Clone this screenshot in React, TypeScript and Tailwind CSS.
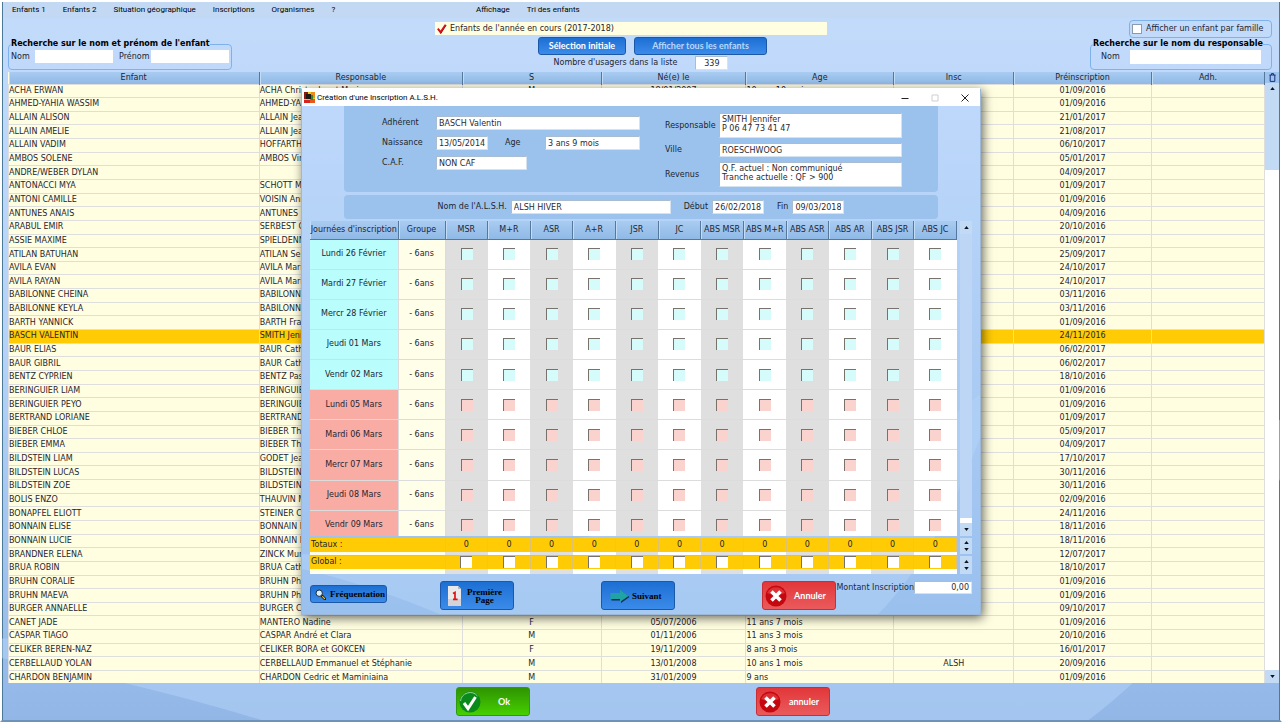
import React from 'react';

const SANS = "font-['DejaVu_Sans',sans-serif]";

const MENU_LEFT = [
    'Enfants 1',
    'Enfants 2',
    'Situation géographique',
    'Inscriptions',
    'Organismes',
    '?',
];

interface Child {
    name: string;
    parent: string;
    date: string;
    sex?: string;
    born?: string;
    age?: string;
    insc?: string;
}

const CHILDREN: Child[] = [
    { name: 'ACHA ERWAN', parent: 'ACHA Christophe et Marie', date: '01/09/2016', sex: 'M', born: '18/01/2007', age: '10 ans 10 mois' },
    { name: 'AHMED-YAHIA WASSIM', parent: 'AHMED-YAHIA', date: '01/09/2016' },
    { name: 'ALLAIN ALISON', parent: 'ALLAIN Jean', date: '21/01/2017' },
    { name: 'ALLAIN AMELIE', parent: 'ALLAIN Jean', date: '21/08/2017' },
    { name: 'ALLAIN VADIM', parent: 'HOFFARTH', date: '06/10/2017' },
    { name: 'AMBOS SOLENE', parent: 'AMBOS Vince', date: '05/01/2017' },
    { name: 'ANDRE/WEBER DYLAN', parent: '', date: '04/09/2017' },
    { name: 'ANTONACCI MYA', parent: 'SCHOTT Ma', date: '01/09/2017' },
    { name: 'ANTONI CAMILLE', parent: 'VOISIN Anne', date: '01/09/2016' },
    { name: 'ANTUNES ANAIS', parent: 'ANTUNES Ma', date: '04/09/2016' },
    { name: 'ARABUL EMIR', parent: 'SERBEST C', date: '20/10/2016' },
    { name: 'ASSIE MAXIME', parent: 'SPIELDENN', date: '01/09/2017' },
    { name: 'ATILAN BATUHAN', parent: 'ATILAN Selim', date: '25/09/2017' },
    { name: 'AVILA EVAN', parent: 'AVILA Marie', date: '24/10/2017' },
    { name: 'AVILA RAYAN', parent: 'AVILA Marie', date: '24/10/2017' },
    { name: 'BABILONNE CHEINA', parent: 'BABILONNE', date: '03/11/2016' },
    { name: 'BABILONNE KEYLA', parent: 'BABILONNE', date: '03/11/2016' },
    { name: 'BARTH YANNICK', parent: 'BARTH Fran', date: '01/09/2016' },
    { name: 'BASCH VALENTIN', parent: 'SMITH Jenn', date: '24/11/2016' },
    { name: 'BAUR ELIAS', parent: 'BAUR Cathe', date: '06/02/2017' },
    { name: 'BAUR GIBRIL', parent: 'BAUR Cathe', date: '06/02/2017' },
    { name: 'BENTZ CYPRIEN', parent: 'BENTZ Pasc', date: '18/10/2016' },
    { name: 'BERINGUIER LIAM', parent: 'BERINGUIER', date: '01/09/2016' },
    { name: 'BERINGUIER PEYO', parent: 'BERINGUIER', date: '01/09/2016' },
    { name: 'BERTRAND LORIANE', parent: 'BERTRAND', date: '01/09/2017' },
    { name: 'BIEBER CHLOE', parent: 'BIEBER Tho', date: '05/09/2017' },
    { name: 'BIEBER EMMA', parent: 'BIEBER Tho', date: '04/09/2017' },
    { name: 'BILDSTEIN LIAM', parent: 'GODET Jean', date: '17/10/2017' },
    { name: 'BILDSTEIN LUCAS', parent: 'BILDSTEIN', date: '30/11/2016' },
    { name: 'BILDSTEIN ZOE', parent: 'BILDSTEIN', date: '30/11/2016' },
    { name: 'BOLIS ENZO', parent: 'THAUVIN Ma', date: '02/09/2016' },
    { name: 'BONAPFEL ELIOTT', parent: 'STEINER Cl', date: '24/11/2016' },
    { name: 'BONNAIN ELISE', parent: 'BONNAIN Ni', date: '18/11/2016' },
    { name: 'BONNAIN LUCIE', parent: 'BONNAIN Ni', date: '18/11/2016' },
    { name: 'BRANDNER ELENA', parent: 'ZINCK Muri', date: '12/07/2017' },
    { name: 'BRUA ROBIN', parent: 'BRUA Cath', date: '18/10/2017' },
    { name: 'BRUHN CORALIE', parent: 'BRUHN Phil', date: '01/09/2016' },
    { name: 'BRUHN MAEVA', parent: 'BRUHN Phil', date: '01/09/2016' },
    { name: 'BURGER ANNAELLE', parent: 'BURGER Cé', date: '09/10/2017' },
    { name: 'CANET JADE', parent: 'MANTERO Nadine', date: '01/09/2016', sex: 'F', born: '05/07/2006', age: '11 ans 7 mois' },
    { name: 'CASPAR TIAGO', parent: 'CASPAR André et Clara', date: '20/10/2016', sex: 'M', born: '01/11/2006', age: '11 ans 3 mois' },
    { name: 'CELIKER BEREN-NAZ', parent: 'CELIKER BORA et GOKCEN', date: '16/01/2017', sex: 'F', born: '19/11/2009', age: '8 ans 3 mois' },
    { name: 'CERBELLAUD YOLAN', parent: 'CERBELLAUD Emmanuel et Stéphanie', date: '20/09/2016', sex: 'M', born: '13/01/2008', age: '10 ans 1 mois', insc: 'ALSH' },
    { name: 'CHARDON BENJAMIN', parent: 'CHARDON Cedric et Maminiaina', date: '01/09/2016', sex: 'M', born: '31/01/2009', age: '9 ans' },
];

const SELECTED = 'BASCH VALENTIN';

const DAYS = [
    'Lundi 26 Février',
    'Mardi 27 Février',
    'Mercr 28 Février',
    'Jeudi 01 Mars',
    'Vendr 02 Mars',
    'Lundi 05 Mars',
    'Mardi 06 Mars',
    'Mercr 07 Mars',
    'Jeudi 08 Mars',
    'Vendr 09 Mars',
];

const SLOTS = ['MSR', 'M+R', 'ASR', 'A+R', 'JSR', 'JC', 'ABS MSR', 'ABS M+R', 'ABS ASR', 'ABS AR', 'ABS JSR', 'ABS JC'];

// --- Icons ---

const Arrow = ({ up = false }: { up?: boolean }) => (
    <svg className="h-[3px] w-[5px]" viewBox="0 0 6 4">
        <path d={up ? 'M0 4L3 0L6 4Z' : 'M0 0L3 4L6 0Z'} fill="#0b1420" />
    </svg>
);

const CrossIcon = () => (
    <svg className="size-[22px] shrink-0" viewBox="0 0 22 22">
        <circle cx="11" cy="11" r="10.5" fill="#c5080f" />
        <path d="M2 8a10 10 0 0 1 18 0Q11 12 2 8Z" fill="#dc3034" />
        <path d="M6.5 6.5l9 9M15.5 6.5l-9 9" stroke="#fff" strokeWidth="3.6" />
    </svg>
);

const OkIcon = () => (
    <svg className="size-[22px] shrink-0" viewBox="0 0 22 22">
        <circle cx="11" cy="11" r="10.5" fill="#0b8a1c" />
        <path d="M1.500 10a9.700 9.700 0 0 1 17 -5" fill="none" stroke="#8fd694" strokeWidth="1" />
        <path d="M5 12l4 5.5L16.5 6" fill="none" stroke="#fff" strokeWidth="3" />
    </svg>
);

const RedCheckIcon = () => (
    <svg className="size-[10px]" viewBox="0 0 10 10">
        <path d="M1.2 5.2L3.8 9L9 1" fill="none" stroke="#400" strokeWidth="1.2" />
        <path d="M0.8 4.6L3.6 8L8.6 0.8" fill="none" stroke="#d8101c" strokeWidth="1.9" />
    </svg>
);

const MagnifierIcon = () => (
    <svg className="size-[11px] shrink-0" viewBox="0 0 11 11">
        <path d="M6 6l4 4" stroke="#1a1a1a" strokeWidth="2.6" strokeLinecap="round" />
        <path d="M7.6 7.6l2 2" stroke="#e8c040" strokeWidth="1.2" strokeLinecap="round" />
        <circle cx="4.2" cy="4.2" r="3.2" fill="#d8f0fb" stroke="#1a2a3a" strokeWidth="1" />
    </svg>
);

const FirstPageIcon = () => (
    <svg className="h-5 w-[13px] shrink-0" viewBox="0 0 13 20">
        <path d="M0 0h10l3 3v17H0Z" fill="#e9e9ec" />
        <path d="M10 0v3h3Z" fill="#b5b8c0" />
        <path d="M0 13h13v7H0Z" fill="#d3d3d8" />
        <path d="M5 7.4l2-1v7M5 13.4h4.600" fill="none" stroke="#e01414" strokeWidth="1.7" />
    </svg>
);

const NextIcon = () => (
    <svg className="h-[14px] w-[20px] shrink-0" viewBox="0 0 20 14">
        <path d="M1.500 5H11V1.500L19.500 8L11 14V11.500H1.500Z" fill="#0c2f57" />
        <path d="M0.500 4H10V0.500L18.500 7L10 13V10H0.500Z" fill="#1fa3a4" />
    </svg>
);

const TrashIcon = () => (
    <svg className="h-[9px] w-[7px]" viewBox="0 0 7 9">
        <path d="M0.500 2h6M2.500 2V0.600h2V2M1.200 2v6.400h4.600V2" fill="none" stroke="#1b2f7a" strokeWidth="1" />
    </svg>
);

const AppIcon = () => (
    <svg className="size-[11px]" viewBox="0 0 11 11">
        <path d="M0 0h11v11H0Z" fill="#f0c419" />
        <path d="M0 0h4v7H0Z" fill="#8c1a12" />
        <path d="M7 0h4v6H7Z" fill="#f08a1c" />
        <path d="M0 8h6v3H0Z" fill="#d8241c" />
        <path d="M6 7h5v4H6Z" fill="#e8581c" />
        <path d="M2 2h5v5H2Z" fill="#1c1a14" />
        <path d="M7 3h2v5H7Z" fill="#2f8a2c" />
    </svg>
);

// --- Shared pieces ---

const FIELD = 'bg-white border border-[#a9bdd2] border-b-[#d5e3f1] border-r-[#d5e3f1] text-[#2a2a33] px-[2px] outline-none';

const HEAD = 'bg-linear-to-b from-[#a9cbf1] to-[#8fb9e6] font-normal border-r border-[#56789c] shadow-[inset_1px_0_0_#c3dcf7]';

const BLUE_BUTTON = 'rounded-[3px] border border-[#1b58a8] bg-linear-to-b from-[#1c6fd3] to-[#3b8bea]';

const RED_BUTTON = 'flex h-[29px] w-[74px] items-center rounded-[3px] border border-[#c92e33] bg-linear-to-b from-[#e2363a] to-[#ea5a5c] px-[2px] text-white';

const Swoosh = () => (
    <svg className="pointer-events-none absolute inset-0 size-full" viewBox="0 0 1282 722" preserveAspectRatio="none">
        <path d="M0 660Q120 680 260 722H1090Q1200 640 1282 480V420Q900 640 0 640Z" fill="#b4d4f7" opacity="0.5" />
    </svg>
);

interface FieldProps {
    id: string;
    label: string;
    value: string;
    labelClass: string;
    inputClass: string;
}

const Field: React.FC<FieldProps> = ({ id, label, value, labelClass, inputClass }) => (
    <div className="flex items-center">
        <label htmlFor={id} className={labelClass}>{label}</label>
        <input id={id} defaultValue={value} className={`h-[14px] ${FIELD} ${inputClass}`} />
    </div>
);

const AreaField: React.FC<FieldProps> = ({ id, label, value, labelClass, inputClass }) => (
    <div className="flex items-center">
        <label htmlFor={id} className={labelClass}>{label}</label>
        <textarea id={id} rows={2} defaultValue={value} className={`block h-[25px] resize-none overflow-hidden pt-px leading-[9px] ${FIELD} ${inputClass}`} />
    </div>
);

const SlotCols = () => (
    <colgroup>
        <col className="w-[88px]" />
        <col className="w-[47px]" />
        {SLOTS.map((s) => <col key={s} />)}
    </colgroup>
);

const CHECKBOX = 'block mx-auto size-3 appearance-none border-t border-l border-[#77736c]';

// --- Registration dialog ---

const RegistrationDialog = () => (
    <section
        aria-label="Création d'une Inscription A.L.S.H."
        className="absolute inset-x-0 top-[86px] mx-auto w-[680px] overflow-hidden border border-[#9db7d6] border-t-white bg-linear-to-b from-[#bfd9fb] to-[#9ac0ee] shadow-[2px_3px_10px_rgba(0,0,0,0.6)]"
    >
        <Swoosh />
        <header className="relative flex h-[17px] items-center bg-white pl-[2px] pr-[11px]">
            <AppIcon />
            <h2 className="ml-[2px] flex-1 font-['Roboto',sans-serif] text-[8px] text-black">Création d'une Inscription A.L.S.H.</h2>
            <div className="flex items-center gap-[22px]">
                <button type="button" aria-label="Réduire">
                    <svg className="size-[8px]" viewBox="0 0 8 8"><path d="M0.500 4.500h7" stroke="#222" /></svg>
                </button>
                <button type="button" aria-label="Agrandir" disabled>
                    <svg className="size-[8px]" viewBox="0 0 8 8"><path d="M1 1h6v6H1Z" fill="none" stroke="#cfcfcf" /></svg>
                </button>
                <button type="button" aria-label="Fermer">
                    <svg className="size-[8px]" viewBox="0 0 8 8"><path d="M0.500 0.500l7 7M7.500 0.500l-7 7" stroke="#222" /></svg>
                </button>
            </div>
        </header>

        <div className="relative px-2 pb-1">
            {/* Child details */}
            <div className="mx-[34px] flex h-[86px] justify-between rounded-b-[4px] bg-[#9ac2ec] pl-[38px] pr-9 pt-[7px]">
                <div className="flex flex-col gap-[6px] pt-[3px]">
                    <Field id="adherent" label="Adhérent" value="BASCH Valentin" labelClass="w-[54px]" inputClass="w-[204px]" />
                    <div className="flex">
                        <Field id="naissance" label="Naissance" value="13/05/2014" labelClass="w-[54px]" inputClass="w-[52px] text-right" />
                        <Field id="age" label="Age" value="3 ans 9 mois" labelClass="ml-[17px] w-[40px]" inputClass="w-[95px]" />
                    </div>
                    <Field id="caf" label="C.A.F." value="NON CAF" labelClass="w-[54px]" inputClass="w-[91px]" />
                </div>
                <div className="flex flex-col gap-[5px]">
                    <AreaField id="responsable" label="Responsable" value={'SMITH Jennifer\nP 06 47 73 41 47'} labelClass="w-[54px]" inputClass="w-[183px]" />
                    <Field id="ville" label="Ville" value="ROESCHWOOG" labelClass="w-[54px]" inputClass="w-[183px]" />
                    <AreaField id="revenus" label="Revenus" value={'Q.F. actuel : Non communiqué\nTranche actuelle : QF > 900'} labelClass="w-[54px]" inputClass="w-[183px]" />
                </div>
            </div>

            <div className="mx-[34px] mt-[3px] flex h-6 items-center justify-center gap-[13px] rounded-[4px] bg-[#9ac2ec]">
                <Field id="alsh" label="Nom de l'A.L.S.H." value="ALSH HIVER" labelClass="mr-1" inputClass="w-[160px]" />
                <Field id="debut" label="Début" value="26/02/2018" labelClass="mr-1" inputClass="w-[52px] text-center" />
                <Field id="fin" label="Fin" value="09/03/2018" labelClass="mr-1" inputClass="w-[52px] text-center" />
            </div>

            {/* Attendance grid */}
            <div className="mt-[2px] flex h-[315px] gap-[3px]">
                <div className="flex-1 overflow-hidden bg-white">
                    <table className="h-[320px] w-full table-fixed border-collapse text-center">
                        <SlotCols />
                        <thead>
                            <tr className="h-[18px]">
                                <th className={`${HEAD} border-b whitespace-nowrap`}>Journées d'inscription</th>
                                <th className={`${HEAD} border-b`}>Groupe</th>
                                {SLOTS.map((s) => <th key={s} className={`${HEAD} border-b whitespace-nowrap`}>{s}</th>)}
                            </tr>
                        </thead>
                        <tbody>
                            {DAYS.map((day, i) => (
                                <tr key={day}>
                                    <td className={`border border-[#dcdcdc] border-l-0 ${i < 5 ? 'bg-[#b9fdfd]' : 'bg-[#f9aca3]'}`}>{day}</td>
                                    <td className="border border-[#dcdcdc] bg-[#fffee8]">- 6ans</td>
                                    {SLOTS.map((s) => (
                                        <td key={s} className="border-y border-[#dcdcdc] odd:bg-[#dfdfdf]">
                                            <input type="checkbox" aria-label={`${day} ${s}`} className={`${CHECKBOX} ${i < 5 ? 'bg-[#d6fbfb]' : 'bg-[#fad3cf]'}`} />
                                        </td>
                                    ))}
                                </tr>
                            ))}
                        </tbody>
                    </table>
                </div>
                <div className="flex w-3 flex-col bg-white">
                    <div className="flex h-[13px] items-center justify-center bg-[#c3daf5]"><Arrow up /></div>
                    <div className="flex-1 bg-[#bdd6f5]" />
                    <div className="mt-[5px] flex h-[13px] items-center justify-center bg-[#c3daf5]"><Arrow /></div>
                </div>
            </div>

            {/* Totals and global selection */}
            <div className="mt-[2px] flex gap-[3px]">
                <table className="flex-1 table-fixed border-collapse text-center">
                    <SlotCols />
                    <tbody>
                        <tr className="h-[14px] bg-[#ffcb05]">
                            <th colSpan={2} scope="row" className="border-r border-[#dfc271] pl-px text-left font-normal">Totaux :</th>
                            {SLOTS.map((s) => <td key={s} className="border-r border-[#dfc271]">0</td>)}
                        </tr>
                        <tr className="h-[3px]">
                            <td colSpan={2} className="border-b border-[#9fc3ee] bg-[#fffee8]" />
                            {SLOTS.map((s) => <td key={s} className="border-b border-[#9fc3ee] bg-white even:bg-[#dfdfdf]" />)}
                        </tr>
                        <tr className="h-[14px] bg-[#ffcb05]">
                            <th colSpan={2} scope="row" className="border-r border-[#dfc271] pl-px text-left font-normal">Global :</th>
                            {SLOTS.map((s) => (
                                <td key={s} className="border-r border-[#dfc271]">
                                    <input type="checkbox" aria-label={`Global ${s}`} className={`${CHECKBOX} bg-white`} />
                                </td>
                            ))}
                        </tr>
                        <tr className="h-[5px]">
                            <td colSpan={2} className="bg-[#fffee8]" />
                            {SLOTS.map((s) => <td key={s} className="bg-white even:bg-[#dfdfdf]" />)}
                        </tr>
                    </tbody>
                </table>
                <div className="flex w-3 flex-col gap-[2px]">
                    <div className="flex h-4 flex-col items-center justify-evenly bg-[#c3daf5]"><Arrow up /><Arrow /></div>
                    <div className="flex flex-1 flex-col items-center justify-evenly bg-[#c3daf5]"><Arrow up /><Arrow /></div>
                </div>
            </div>

            {/* Actions */}
            <div className="mt-[7px] flex items-start font-['Liberation_Serif',serif] text-[9px] font-bold leading-[8px] text-black">
                <button type="button" className={`mt-1 flex h-[18px] w-[77px] items-center gap-1 px-1 ${BLUE_BUTTON}`}>
                    <MagnifierIcon />
                    Fréquentation
                </button>
                <button type="button" className={`ml-[53px] flex h-[29px] w-[74px] items-center gap-[2px] px-[7px] ${BLUE_BUTTON}`}>
                    <FirstPageIcon />
                    Première Page
                </button>
                <button type="button" className={`ml-[87px] flex h-[29px] w-[74px] items-center gap-[2px] px-[8px] ${BLUE_BUTTON}`}>
                    <NextIcon />
                    Suivant
                </button>
                <button type="button" className={`ml-[87px] font-['Lato',sans-serif] ${RED_BUTTON}`}>
                    <CrossIcon />
                    <span className="flex-1 text-center">Annuler</span>
                </button>
                <div className={`ml-auto flex items-center text-[8px] font-normal text-[#1b2a3c] ${SANS}`}>
                    <label htmlFor="montant" className="whitespace-nowrap">Montant Inscription</label>
                    <input id="montant" defaultValue="0,00" className={`h-[13px] w-[58px] text-right ${FIELD}`} />
                </div>
            </div>
        </div>
    </section>
);

// --- Main window ---

const App = () => (
    <div className={`relative flex min-h-screen flex-col border-2 border-white border-b-[#6d93bb] bg-linear-to-b from-[#c3dbfb] via-[#b4d2f7] to-[#92b7e7] text-[8px] leading-[10px] text-[#1f2530] shadow-[inset_1px_0_0_#4b7a99,inset_-1px_0_0_#4b7a99] ${SANS}`}>
        <Swoosh />
        <nav className="relative mx-px flex h-4 items-center bg-[#c3d9f3] pl-[9px] font-['Roboto',sans-serif] text-[8px] text-black">
            <div className="flex w-[464px] gap-[17px]">
                {MENU_LEFT.map((item) => <a key={item} href="#">{item}</a>)}
            </div>
            <a href="#" className="mr-[17px]">Affichage</a>
            <a href="#">Tri des enfants</a>
        </nav>

        <div className="relative flex h-[54px] justify-between pl-[6px] pr-2">
            <fieldset className="mt-[21px] h-[31px] w-[222px] rounded-[4px] border border-[#7fb2ea] px-[2px]">
                <legend className="text-[8px] font-bold leading-[10px] text-black">Recherche sur le nom et prénom de l'enfant</legend>
                <div className="mt-px flex items-center">
                    <label htmlFor="nom" className="w-6">Nom</label>
                    <input id="nom" className="h-[13px] w-[78px] bg-white" />
                    <label htmlFor="prenom" className="ml-[6px] mr-[2px]">Prénom</label>
                    <input id="prenom" className="h-[13px] w-[78px] bg-white" />
                </div>
            </fieldset>

            <div className="absolute inset-x-0 mx-auto mt-1 flex w-[412px] flex-col items-center">
                <div className="flex h-[13px] w-[392px] items-center gap-[3px] self-start bg-[#fffee1] pl-[2px]">
                    <RedCheckIcon />
                    Enfants de l'année en cours (2017-2018)
                </div>
                <div className="mt-[2px] flex gap-2 self-end pr-20 font-['Lato',sans-serif] text-[9px] font-bold">
                    <button type="button" className={`h-[18px] w-[88px] text-white ${BLUE_BUTTON}`}>Sélection initiale</button>
                    <button type="button" className={`h-[18px] w-[133px] text-[#b9d8fb] ${BLUE_BUTTON}`}>Afficher tous les enfants</button>
                </div>
                <div className="mt-px flex items-center gap-[18px]">
                    <label htmlFor="usagers">Nombre d'usagers dans la liste</label>
                    <input id="usagers" defaultValue="339" className={`h-[14px] w-[33px] text-center ${FIELD}`} />
                </div>
            </div>

            <div className="flex flex-col items-end">
                <label className="mt-[2px] flex h-[18px] w-[143px] items-center gap-1 rounded-[4px] border border-[#7fb2ea] px-[2px]">
                    <input type="checkbox" className="size-[10px] appearance-none border border-[#8a9bb0] bg-white" />
                    Afficher un enfant par famille
                </label>
                <fieldset className="mt-px h-[31px] w-[182px] rounded-[4px] border border-[#7fb2ea] px-[2px]">
                    <legend className="text-[8px] font-bold leading-[10px] text-black">Recherche sur le nom du responsable</legend>
                    <div className="mt-px flex items-center justify-between px-2">
                        <label htmlFor="nomResponsable">Nom</label>
                        <input id="nomResponsable" className="h-[14px] w-[131px] bg-white" />
                    </div>
                </fieldset>
            </div>
        </div>

        {/* Children list */}
        <main className="relative flex h-[611px] overflow-hidden pl-[6px] pr-px">
            <table className="h-[613px] flex-1 table-fixed border-collapse bg-[#fffee1]">
                <colgroup>
                    <col className="w-[251px]" />
                    <col className="w-[203px]" />
                    <col className="w-[139px]" />
                    <col className="w-[145px]" />
                    <col className="w-[148px]" />
                    <col className="w-[120px]" />
                    <col className="w-[138px]" />
                    <col className="w-[113px]" />
                </colgroup>
                <thead>
                    <tr className="h-3">
                        {['Enfant', 'Responsable', 'S', 'Né(e) le', 'Age', 'Insc', 'Préinscription', 'Adh.'].map((h) => (
                            <th key={h} className={HEAD}>{h}</th>
                        ))}
                    </tr>
                </thead>
                <tbody>
                    {CHILDREN.map((c) => (
                        <tr key={c.name} className={`[&>td]:border [&>td]:border-[#dedfdc] [&>td]:p-0 ${c.name === SELECTED ? 'bg-[#ffcb05]' : ''}`}>
                            <td>{c.name}</td>
                            <td className="whitespace-nowrap">{c.parent}</td>
                            <td className="text-center">{c.sex}</td>
                            <td className="text-center">{c.born}</td>
                            <td>{c.age}</td>
                            <td className="text-center">{c.insc}</td>
                            <td className="text-center">{c.date}</td>
                            <td />
                        </tr>
                    ))}
                </tbody>
            </table>
            <div className="flex w-[14px] flex-col bg-white">
                <button type="button" aria-label="Supprimer" className="flex h-[11px] items-center justify-center bg-[#9dc3ee]"><TrashIcon /></button>
                <div className="flex h-[11px] items-center justify-center bg-[#c3daf5]"><Arrow up /></div>
                <div className="h-[76px] bg-[#c3daf5]" />
                <div className="mt-auto flex h-[13px] items-center justify-center bg-[#c3daf5]"><Arrow /></div>
            </div>
        </main>

        <footer className="relative flex justify-center gap-[226px] pb-1 pl-1 pt-1 font-['Lato',sans-serif] text-[9px] font-bold">
            <button type="button" className="flex h-[29px] w-[74px] items-center rounded-[3px] border border-[#2f9a10] bg-linear-to-b from-[#2f9400] to-[#46d000] px-[2px] text-white">
                <OkIcon />
                <span className="flex-1 text-center">Ok</span>
            </button>
            <button type="button" className={RED_BUTTON}>
                <CrossIcon />
                <span className="flex-1 text-center">annuler</span>
            </button>
        </footer>

        <RegistrationDialog />
    </div>
);

export default App;
